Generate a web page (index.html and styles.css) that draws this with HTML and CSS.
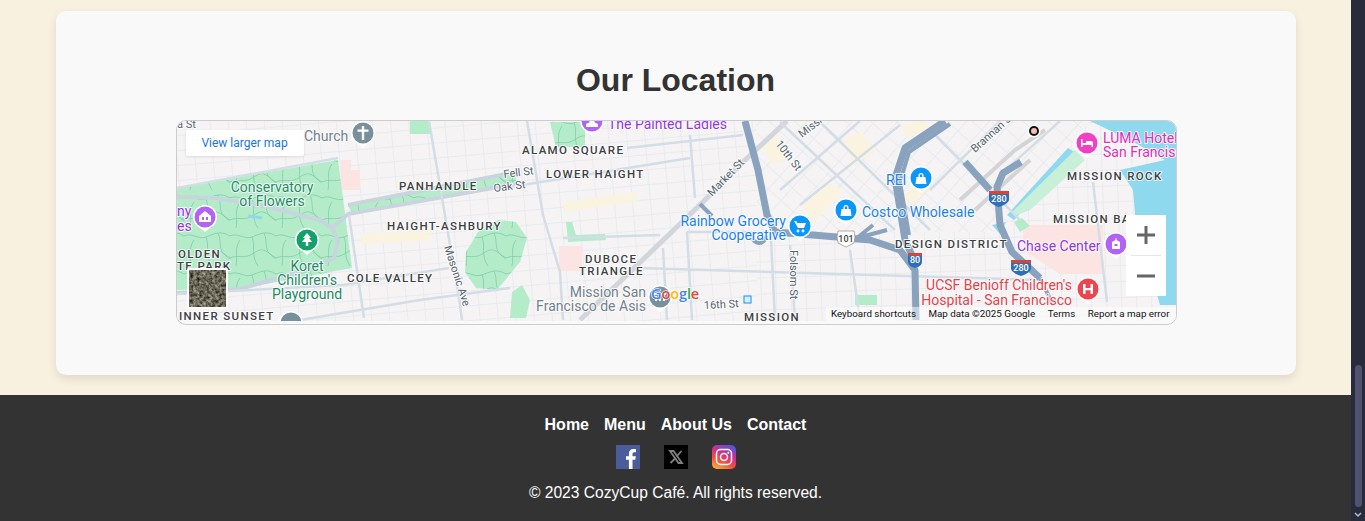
FILE: index.html
```html
<!DOCTYPE html>
<html lang="en">
<head>
    <meta charset="UTF-8">
    <meta name="viewport" content="width=device-width, initial-scale=1.0">
    <title>CozyCup Café</title>
    <link rel="stylesheet" href="styles.css">
</head>
<body>
    <div class="page">
        <section class="location-card">
            <h2>Our Location</h2>
            <div class="map-frame">
                <div class="map">
                    <svg class="map-art" viewBox="177 121 999 200" width="999" height="200">
                        <defs>
                            <pattern id="grid-west" width="18" height="15" patternUnits="userSpaceOnUse" patternTransform="rotate(-5)">
                                <path d="M0 0V15M0 0H18" class="grid-line"/>
                            </pattern>
                            <pattern id="grid-south" width="15" height="16" patternUnits="userSpaceOnUse" patternTransform="rotate(-2)">
                                <path d="M0 0V16M0 0H15" class="grid-line"/>
                            </pattern>
                            <pattern id="grid-east" width="17" height="17" patternUnits="userSpaceOnUse" patternTransform="rotate(42)">
                                <path d="M0 0V17M0 0H17" class="grid-line"/>
                            </pattern>
                            <pattern id="park-mesh" width="46" height="38" patternUnits="userSpaceOnUse">
                                <path d="M0 8C8 4 14 12 22 9S36 2 46 8M6 38C8 28 4 20 10 12M22 9C26 18 20 26 28 38M34 5C38 14 34 20 40 26S46 30 46 30M0 30C8 26 14 32 24 25S36 24 46 30" class="park-path"/>
                            </pattern>
                            <filter id="aerial" x="0" y="0" width="100%" height="100%" color-interpolation-filters="sRGB">
                                <feTurbulence type="fractalNoise" baseFrequency="0.32" numOctaves="3" seed="4"/>
                                <feColorMatrix values="0 0 0 0.85 -0.01  0 0 0 0.85 -0.02  0 0 0 0.75 -0.03  0 0 0 0 1"/>
                            </filter>
                            <g id="pin-shape">
                                <path d="M-8 8L0 15L8 8Z" class="pin-tail"/>
                                <circle r="12" class="pin-ring"/>
                            </g>
                        </defs>

                        <rect x="177" y="121" width="999" height="200" class="land"/>
                        <rect x="177" y="121" width="580" height="200" fill="url(#grid-west)"/>
                        <path d="M757 232H1176V321H757Z" fill="url(#grid-south)"/>
                        <path d="M1000 232L1090 121H1176V232Z" fill="url(#grid-south)"/>
                        <path d="M757 121H1090L1000 232H757Z" fill="url(#grid-east)"/>

                        <!-- blocks -->
                        <path d="M760 142L775 136L790 160L772 164ZM803 208L825 182L843 190L815 222ZM842 140L860 132L877 150L855 165ZM903 196L915 182L927 190L912 205Z" class="tan"/>
                        <path d="M361 234L430 230L430 240L362 244ZM563 202L637 192L637 201L564 212ZM900 126L925 121L930 128L908 138Z" class="tan"/>
                        <path d="M341 160H351V170H360V190H341ZM559 246H582V271H559Z" class="pink"/>
                        <path d="M1023 225H1103V274H1060L1023 250Z" class="pink"/>

                        <!-- water -->
                        <path d="M1090 121H1176V305H1160L1150 270L1138 250L1133 190L1120 170L1165 160L1130 140Z" class="water"/>
                        <path d="M1007 215L1068 148L1076 153L1014 220Z" class="water"/>
                        <path d="M992 225L1006 222L1000 234Z" class="water"/>

                        <!-- parks -->
                        <path d="M177 188L338 160L352 268L244 288L177 290Z" class="park"/>
                        <path d="M177 188L338 160L352 268L244 288L177 290Z" fill="url(#park-mesh)"/>
                        <path d="M348 205L516 174L516 184L352 214Z" class="park"/>
                        <path d="M348 205L516 174L516 184L352 214Z" fill="url(#park-mesh)"/>
                        <path d="M466 252L478 232L498 220L516 222L527 238L520 262L497 290L476 288L465 272Z" class="park"/>
                        <path d="M466 252L478 232L498 220L516 222L527 238L520 262L497 290L476 288L465 272Z" fill="url(#park-mesh)"/>
                        <path d="M410 121H430V134H410Z" class="park"/>
                        <path d="M550 122H585V147H556Z" class="park"/>
                        <path d="M550 122H585V147H556Z" fill="url(#park-mesh)"/>
                        <path d="M510 318L512 292L522 285L530 300L526 318Z" class="park"/>
                        <path d="M566 222L572 222L576 235L605 234L606 240L568 242Z" class="park"/>
                        <path d="M855 295H877V305H855ZM1014 222L1022 218L1030 226L1020 232Z" class="park"/>
                        <path d="M1012 212L1075 150L1085 160L1030 210L1015 216Z" class="park-light"/>

                        <!-- trails and lake in the park -->
                        <path d="M248 216L262 218" class="lake"/>
                        <path d="M177 197L215 198L260 205L320 220L332 228L338 240L334 258L300 272L240 289L177 293" class="road-major"/>
                        <path d="M332 228L348 214L516 184M348 205L516 172" class="road-major"/>

                        <!-- streets -->
                        <path d="M177 188L338 158M349 215L364 318M343 285L449 268M177 294L343 285M300 320L420 300L510 288M429 121L459 298L462 320M527 121L543 215L560 272L563 320M510 187L690 158M627 148L743 135M690 135L695 198M687 232L692 320M663 248L667 320M563 238L660 235M687 232L787 232M770 220L775 320M850 250L860 320M1093 182L1107 302M790 245L795 320M640 268L1040 280" class="road"/>
                        <path d="M580 320L707 198L745 160L787 121" class="road-market"/>
                        <path d="M780 122L895 230M820 122L930 230M930 130L1020 220M860 121L780 190M900 125L800 205M1000 121L930 190M1060 121L1000 175" class="road"/>
                        <path d="M960 200L1015 150L1045 130M975 210L1030 160" class="road-rail"/>

                        <!-- freeways -->
                        <path d="M745 121L758 170L767 215L775 232L837 237L870 240L900 250L915 270L916 320" class="freeway"/>
                        <path d="M945 121L905 148L895 178L905 240L915 262" class="freeway"/>
                        <path d="M950 124L909 152L900 182L909 235" class="freeway-thin"/>
                        <path d="M857 238L873 225M857 238L887 230" class="freeway-thin"/>
                        <path d="M1021 162L1003 173L997 187L1000 225L1012 252L1040 278" class="freeway"/>
                        <path d="M1040 278L1053 305" class="freeway-thin"/>
                        <path d="M965 162L990 190" class="freeway"/>
                        <path d="M752 236A7 7 0 0 0 766 236" class="freeway-thin"/>
                        <path d="M700 204L712 216" class="freeway-thin"/>

                        <!-- area labels -->
                        <text x="522" y="154" class="area">ALAMO SQUARE</text>
                        <text x="546" y="178" class="area">LOWER HAIGHT</text>
                        <text x="399" y="190" class="area">PANHANDLE</text>
                        <text x="387" y="230" class="area">HAIGHT-ASHBURY</text>
                        <text x="347" y="282" class="area">COLE VALLEY</text>
                        <text x="178" y="258" class="area">OLDEN</text>
                        <text x="177" y="270" class="area">TE PARK</text>
                        <text x="179" y="320" class="area">INNER SUNSET</text>
                        <text x="585" y="263" class="area">DUBOCE</text>
                        <text x="579" y="275" class="area">TRIANGLE</text>
                        <text x="744" y="321" class="area">MISSION</text>
                        <text x="895" y="248" class="area">DESIGN DISTRICT</text>
                        <text x="1067" y="180" class="area">MISSION ROCK</text>
                        <text x="1053" y="223" class="area">MISSION BA</text>

                        <!-- street labels -->
                        <text x="177" y="128" class="street">a St</text>
                        <text transform="translate(504 178) rotate(-7)" class="street">Fell St</text>
                        <text transform="translate(494 192) rotate(-7)" class="street">Oak St</text>
                        <text transform="translate(444 247) rotate(72)" class="street">Masonic Ave</text>
                        <text transform="translate(712 197) rotate(-46)" class="street">Market St</text>
                        <text transform="translate(775 144) rotate(52)" class="street">10th St</text>
                        <text transform="translate(802 138) rotate(-38)" class="street">Missi</text>
                        <text transform="translate(790 250) rotate(90)" class="street">Folsom St</text>
                        <text transform="translate(704 309) rotate(-3)" class="street">16th St</text>
                        <text transform="translate(975 153) rotate(-42)" class="street">Brannan St</text>

                        <!-- place labels -->
                        <text x="304" y="141" class="poi poi-grey">Church</text>
                        <text x="608" y="129" class="poi poi-purple">The Painted Ladies</text>
                        <text x="272" y="192" class="poi poi-green poi-mid">Conservatory</text>
                        <text x="272" y="206" class="poi poi-green poi-mid">of Flowers</text>
                        <text x="177" y="216" class="poi poi-purple">ny</text>
                        <text x="177" y="231" class="poi poi-purple">es</text>
                        <text x="307" y="271" class="poi poi-green poi-mid">Koret</text>
                        <text x="307" y="285" class="poi poi-green poi-mid">Children's</text>
                        <text x="307" y="299" class="poi poi-green poi-mid">Playground</text>
                        <text x="646" y="297" class="poi poi-grey poi-end">Mission San</text>
                        <text x="646" y="311" class="poi poi-grey poi-end">Francisco de Asis</text>
                        <text x="786" y="226" class="poi poi-blue poi-end">Rainbow Grocery</text>
                        <text x="786" y="240" class="poi poi-blue poi-end">Cooperative</text>
                        <text x="862" y="217" class="poi poi-blue">Costco Wholesale</text>
                        <text x="886" y="185" class="poi poi-blue">REI</text>
                        <text x="1017" y="251" class="poi poi-purple">Chase Center</text>
                        <text x="1103" y="143" class="poi poi-pink">LUMA Hotel</text>
                        <text x="1103" y="157" class="poi poi-pink">San Francisco</text>
                        <text x="1072" y="290" class="poi poi-red poi-end">UCSF Benioff Children's</text>
                        <text x="1072" y="305" class="poi poi-red poi-end">Hospital - San Francisco</text>

                        <!-- pins -->
                        <g transform="translate(363 133)"><use href="#pin-shape"/><circle r="10.5" class="fill-grey"/><path d="M-1.2-7H1.2V-3.5H5.5V-1.2H1.2V7H-1.2V-1.2H-5.5V-3.5H-1.2Z" class="glyph"/></g>
                        <g transform="translate(592 121)"><use href="#pin-shape"/><circle r="10.5" class="fill-purple"/><path d="M-6 6V3L-2 1A3.5 3.5 0 1 1 2 1L6 3V6Z" class="glyph"/></g>
                        <g transform="translate(205 217)"><use href="#pin-shape"/><circle r="10.5" class="fill-purple"/><path d="M-6-1L0-6L6-1V5H-6ZM-3 0V3H-1V0ZM1 0V3H3V0Z" class="glyph"/></g>
                        <g transform="translate(307 240)"><use href="#pin-shape"/><circle r="10.5" class="fill-green"/><path d="M0-7L4-2H2L5 2H1.2V6H-1.2V2H-5L-2-2H-4Z" class="glyph"/></g>
                        <g transform="translate(800 226)"><use href="#pin-shape"/><circle r="10.5" class="fill-blue"/><path d="M-6-5H-3.5L-3-3H6L4 2H-2ZM-2 3.5A1.4 1.4 0 1 0-2 6.4A1.4 1.4 0 1 0-2 3.5ZM3 3.5A1.4 1.4 0 1 0 3 6.4A1.4 1.4 0 1 0 3 3.5Z" class="glyph"/></g>
                        <g transform="translate(846 210)"><use href="#pin-shape"/><circle r="10.5" class="fill-blue"/><path d="M-4.5-1H-2.5V-2.5A2.5 2.5 0 0 1 2.5-2.5V-1H4.5L5.5 6H-5.5ZM-1.2-1H1.2V-2.5A1.2 1.2 0 0 0-1.2-2.5Z" class="glyph"/></g>
                        <g transform="translate(921 178)"><use href="#pin-shape"/><circle r="10.5" class="fill-blue"/><path d="M-4.5-1H-2.5V-2.5A2.5 2.5 0 0 1 2.5-2.5V-1H4.5L5.5 6H-5.5ZM-1.2-1H1.2V-2.5A1.2 1.2 0 0 0-1.2-2.5Z" class="glyph"/></g>
                        <g transform="translate(1087 143)"><use href="#pin-shape"/><circle r="10.5" class="fill-pink"/><path d="M-6-4H-4.5V0H-1V-2H4A2 2 0 0 1 6 0V4H4.5V2H-4.5V4H-6Z" class="glyph"/></g>
                        <g transform="translate(1116 244)"><use href="#pin-shape"/><circle r="10.5" class="fill-purple"/><path d="M-.5-6H.5V-4L4-2V5H-4V-2L-.5-4ZM-1.5 0V2H1.5V0Z" class="glyph"/></g>
                        <g transform="translate(1088 289)"><use href="#pin-shape"/><circle r="10.5" class="fill-red"/><path d="M-5-5H-2.5V-1H2.5V-5H5V5H2.5V1.2H-2.5V5H-5Z" class="glyph"/></g>
                        <g transform="translate(660 297)"><use href="#pin-shape"/><circle r="10.5" class="fill-grey"/><path d="M-5 4V-1H-3V4ZM-1-1H1V4H-1ZM3-1H5V4H3ZM-6-4H6V-2H-6Z" class="glyph"/></g>
                        <g transform="translate(291 323)"><use href="#pin-shape"/><circle r="10.5" class="fill-grey"/></g>
                        <circle cx="1034" cy="131" r="6.5" class="transit-ring"/>
                        <circle cx="1034" cy="131" r="5" class="transit"/>
                        <circle cx="1034" cy="131" r="3" class="transit-dot"/>
                        <rect x="744" y="296" width="7" height="7" class="station"/>

                        <!-- shields -->
                        <g transform="translate(846 239)"><path d="M-8-8H8L9-2L8 4L0 8L-8 4L-9-2Z" class="shield-us"/><text y="2.5" class="shield-dark">101</text></g>
                        <g transform="translate(915 260)"><path d="M-7-6H7V2Q7 6 0 8Q-7 6-7 2Z" class="shield-i"/><path d="M-7-7H7V-4H-7Z" class="shield-top"/><text y="3" class="shield-light">80</text></g>
                        <g transform="translate(999 198)"><path d="M-10-6H10V2Q9 6 0 9Q-9 6-10 2Z" class="shield-i"/><path d="M-10-7H10V-4H-10Z" class="shield-top"/><text y="3.5" class="shield-light">280</text></g>
                        <g transform="translate(1021 267)"><path d="M-10-6H10V2Q9 6 0 9Q-9 6-10 2Z" class="shield-i"/><path d="M-10-7H10V-4H-10Z" class="shield-top"/><text y="3.5" class="shield-light">280</text></g>

                        <!-- google mark -->
                        <text x="651" y="299" class="google"><tspan class="g-blue">G</tspan><tspan class="g-red">o</tspan><tspan class="g-yellow">o</tspan><tspan class="g-blue">g</tspan><tspan class="g-green">l</tspan><tspan class="g-red">e</tspan></text>

                        <!-- satellite thumbnail -->
                        <rect x="187" y="268" width="41" height="41" rx="2" class="thumb-edge"/>
                        <rect x="189" y="270" width="37" height="37" filter="url(#aerial)"/>
                    </svg>

                    <a class="larger-map" href="#">View larger map</a>

                    <div class="zoom-control">
                        <button class="zoom-btn" aria-label="Zoom in">
                            <svg viewBox="0 0 18 18" width="18" height="18"><path d="M7.5 0H10.5V7.5H18V10.5H10.5V18H7.5V10.5H0V7.5H7.5Z"/></svg>
                        </button>
                        <span class="zoom-divider"></span>
                        <button class="zoom-btn" aria-label="Zoom out">
                            <svg viewBox="0 0 18 18" width="18" height="18"><path d="M0 7.5H18V10.5H0Z"/></svg>
                        </button>
                    </div>

                    <div class="map-attrib">
                        <span>Keyboard shortcuts</span>
                        <span>Map data ©2025 Google</span>
                        <span>Terms</span>
                        <span>Report a map error</span>
                    </div>
                </div>
            </div>
        </section>

        <footer class="site-footer">
            <nav class="footer-nav">
                <a href="#">Home</a>
                <a href="#">Menu</a>
                <a href="#">About Us</a>
                <a href="#">Contact</a>
            </nav>
            <div class="socials">
                <a href="#" aria-label="Facebook">
                    <svg viewBox="0 0 24 24" width="24" height="24"><rect width="24" height="24" fill="#4a5c9a"/><path d="M16.5 24V14.8H19.3L19.8 11.2H16.5V9.2C16.5 8 17 7.3 18.3 7.3H20V4.2C19.3 4.1 18.3 4 17.3 4C14.7 4 12.9 5.6 12.9 8.7V11.2H10V14.8H12.9V24Z" fill="#fff"/></svg>
                </a>
                <a href="#" aria-label="X">
                    <svg viewBox="0 0 24 24" width="24" height="24"><rect width="24" height="24" fill="#000"/><path d="M6 6H9.5L18 18H14.5Z" fill="none" stroke="#808080" stroke-width="1.8"/><path d="M17.5 6L13 11M11 13.5L6.5 18" stroke="#808080" stroke-width="1.8"/></svg>
                </a>
                <a href="#" aria-label="Instagram">
                    <svg viewBox="0 0 24 24" width="24" height="24">
                        <defs>
                            <linearGradient id="insta" x1="0.15" y1="1" x2="0.65" y2="0">
                                <stop offset="0" stop-color="#fdb13a"/>
                                <stop offset="0.35" stop-color="#f4503c"/>
                                <stop offset="0.65" stop-color="#d12f8f"/>
                                <stop offset="1" stop-color="#5b51d8"/>
                            </linearGradient>
                        </defs>
                        <rect width="24" height="24" rx="5" fill="url(#insta)"/>
                        <rect x="4.5" y="4.5" width="15" height="15" rx="4" fill="none" stroke="#fff" stroke-width="1.5"/>
                        <circle cx="12" cy="12" r="3.5" fill="none" stroke="#fff" stroke-width="1.5"/>
                        <circle cx="16.3" cy="7.7" r="1" fill="#fff"/>
                    </svg>
                </a>
            </div>
            <p class="copyright">© 2023 CozyCup Café. All rights reserved.</p>
        </footer>
    </div>

    <div class="scrollbar">
        <div class="scroll-track"><div class="scroll-thumb"></div></div>
        <svg class="scroll-arrow" viewBox="0 0 8 6" width="8" height="6"><path d="M1 1L4 4L7 1"/></svg>
    </div>
</body>
</html>
```

FILE: styles.css
```css
html, body {
    height: 100%;
}

body {
    margin: 0;
    display: flex;
    height: 521px;
    overflow: hidden;
    background-color: #f8f1e0;
    color: #333333;
    font-family: "Liberation Sans", Arial, sans-serif;
}

.page {
    flex: 1;
    min-width: 0;
    padding-top: 11px;
}

/* location card */
.location-card {
    box-sizing: border-box;
    width: 1240px;
    margin: 0 auto 20px;
    padding: 50px 120px;
    background-color: #f9f9f9;
    border-radius: 10px;
    box-shadow: 0 4px 10px rgba(0, 0, 0, 0.1);
}

.location-card h2 {
    margin: 0 0 20px;
    font-size: 32px;
    line-height: 39px;
    text-align: center;
    color: #333333;
}

.map-frame {
    box-sizing: border-box;
    width: 1001px;
    border: 1px solid #cccccc;
    border-radius: 10px;
    overflow: hidden;
    padding-bottom: 3px;
}

.map {
    position: relative;
    height: 200px;
}

.map-art {
    display: block;
}

/* map drawing */
.land { fill: #f5f3f4; }
.tan { fill: #faf3e0; }
.pink { fill: #fbe4e1; }
.water { fill: #8fd9ee; }
.park { fill: #b4ecca; }
.park-light { fill: #c8efd8; }
.lake { fill: none; stroke: #8fd9ee; stroke-width: 3; }
.grid-line { fill: none; stroke: #dee4ea; stroke-width: 1; }
.park-path { fill: none; stroke: #7fcba8; stroke-width: 0.8; }
.road { fill: none; stroke: #d3dde6; stroke-width: 2.5; }
.road-major { fill: none; stroke: #c9d4de; stroke-width: 4; }
.road-market { fill: none; stroke: #d2d6dc; stroke-width: 5; }
.road-rail { fill: none; stroke: #d4d4d6; stroke-width: 4; }
.freeway { fill: none; stroke: #89a2bd; stroke-width: 7; stroke-linejoin: round; }
.freeway-thin { fill: none; stroke: #89a2bd; stroke-width: 4; }

.map-art text {
    font-family: Roboto, "Liberation Sans", sans-serif;
    paint-order: stroke;
    stroke: rgba(255, 255, 255, 0.85);
    stroke-width: 2px;
    stroke-linejoin: round;
}

.map-art .area {
    font-size: 11.5px;
    font-weight: 500;
    letter-spacing: 1.35px;
    fill: #3c4043;
}

.map-art .street {
    font-size: 11px;
    fill: #56626d;
}

.map-art .poi { font-size: 14px; }
.map-art .poi-mid { text-anchor: middle; }
.map-art .poi-end { text-anchor: end; }
.poi-grey { fill: #70808d; }
.poi-purple { fill: #9334e6; }
.poi-green { fill: #1b8a63; }
.poi-blue { fill: #1a80f0; }
.poi-pink { fill: #e52ab8; }
.poi-red { fill: #e8404a; }

.pin-tail, .pin-ring { fill: #ffffff; }
.glyph { fill: #ffffff; fill-rule: evenodd; }
.fill-grey { fill: #78909c; }
.fill-purple { fill: #b263f5; }
.fill-green { fill: #12a06b; }
.fill-blue { fill: #0b96fa; }
.fill-pink { fill: #f23fc4; }
.fill-red { fill: #ee4450; }
.transit-ring { fill: #ffffff; }
.transit { fill: #111111; }
.transit-dot { fill: #f2c0b8; }
.station { fill: #d8eefa; stroke: #0b96fa; stroke-width: 1; }

.shield-us { fill: #ffffff; stroke: #9a9a9a; stroke-width: 0.8; }
.shield-i { fill: #2f6fb8; }
.shield-top { fill: #d8443c; }
.map-art .shield-dark,
.map-art .shield-light {
    font-size: 9px;
    font-weight: 500;
    text-anchor: middle;
    stroke: none;
}
.shield-dark { fill: #444444; }
.shield-light { fill: #ffffff; }

.map-art .google {
    font-family: "Open Sans", sans-serif;
    font-size: 14.5px;
    font-weight: 600;
    letter-spacing: -0.1px;
    stroke-width: 1.5px;
}
.g-blue { fill: #4285f4; }
.g-red { fill: #ea4335; }
.g-yellow { fill: #fbbc05; }
.g-green { fill: #34a853; }

.thumb-edge { fill: #ffffff; }

/* map controls */
.larger-map {
    position: absolute;
    top: 9px;
    left: 9px;
    width: 118px;
    height: 26px;
    line-height: 26px;
    text-align: center;
    background-color: #ffffff;
    border-radius: 2px;
    font-family: Roboto, "Liberation Sans", sans-serif;
    font-size: 12px;
    color: #1a73e8;
    text-decoration: none;
    box-shadow: 0 1px 3px rgba(0, 0, 0, 0.1);
}

.zoom-control {
    position: absolute;
    top: 94px;
    right: 10px;
    width: 40px;
    height: 81px;
    display: flex;
    flex-direction: column;
    align-items: center;
    background-color: #ffffff;
}

.zoom-btn {
    flex: 1;
    width: 40px;
    padding: 0;
    border: none;
    background: none;
    display: flex;
    align-items: center;
    justify-content: center;
}

.zoom-btn svg {
    fill: #666666;
}

.zoom-divider {
    width: 30px;
    height: 1px;
    background-color: #e6e6e6;
}

.map-attrib {
    position: absolute;
    right: 0;
    bottom: 0;
    height: 14px;
    display: flex;
    align-items: center;
    gap: 12.5px;
    padding: 0 6px 2px 5px;
    box-sizing: border-box;
    background-color: rgba(255, 255, 255, 0.5);
    font-family: Roboto, "Liberation Sans", sans-serif;
    font-size: 9.8px;
    color: #111111;
}

/* footer */
.site-footer {
    height: 126px;
    box-sizing: border-box;
    padding: 21px 20px 0;
    background-color: #333333;
    color: #ffffff;
    text-align: center;
}

.footer-nav {
    display: flex;
    justify-content: center;
    gap: 15px;
    line-height: 18px;
}

.footer-nav a {
    color: #ffffff;
    font-size: 16px;
    font-weight: bold;
    text-decoration: none;
}

.socials {
    display: flex;
    justify-content: center;
    gap: 24px;
    margin-top: 11px;
}

.socials a {
    display: block;
    height: 24px;
}

.socials svg {
    display: block;
}

.copyright {
    margin: 15px 0 0;
    font-size: 15.6px;
    line-height: 18px;
}

/* dark scrollbar */
.scrollbar {
    width: 14px;
    display: flex;
    flex-direction: column;
    align-items: center;
    background-color: #282b3c;
}

.scroll-track {
    flex: 1;
    width: 7px;
    padding-top: 365px;
    box-sizing: border-box;
}

.scroll-thumb {
    height: 142px;
    background-color: #50526f;
    border-radius: 4px;
}

.scroll-arrow {
    margin-bottom: 3px;
    fill: none;
    stroke: #b8bac4;
    stroke-width: 1.5;
}
```
